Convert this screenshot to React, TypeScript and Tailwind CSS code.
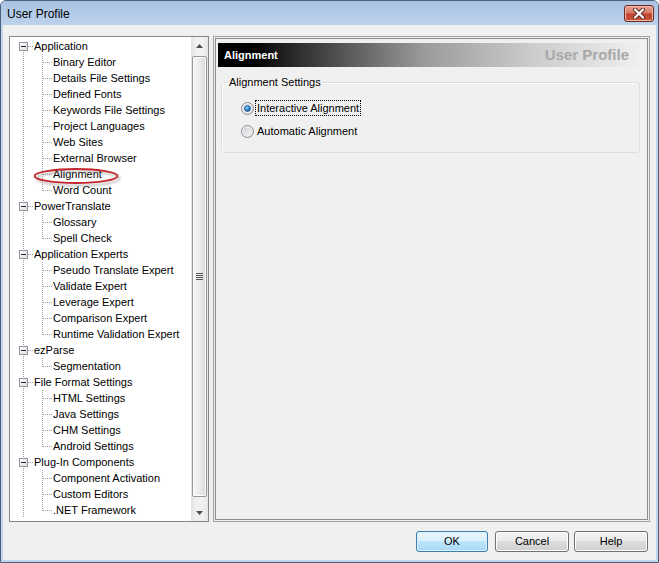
import React from 'react';

type Group = { label: string; children: string[] };

const tree: Group[] = [
  {
    label: 'Application',
    children: [
      'Binary Editor',
      'Details File Settings',
      'Defined Fonts',
      'Keywords File Settings',
      'Project Languages',
      'Web Sites',
      'External Browser',
      'Alignment',
      'Word Count',
    ],
  },
  { label: 'PowerTranslate', children: ['Glossary', 'Spell Check'] },
  {
    label: 'Application Experts',
    children: [
      'Pseudo Translate Expert',
      'Validate Expert',
      'Leverage Expert',
      'Comparison Expert',
      'Runtime Validation Expert',
    ],
  },
  { label: 'ezParse', children: ['Segmentation'] },
  {
    label: 'File Format Settings',
    children: ['HTML Settings', 'Java Settings', 'CHM Settings', 'Android Settings'],
  },
  {
    label: 'Plug-In Components',
    children: ['Component Activation', 'Custom Editors', '.NET Framework'],
  },
];

const DOT = '#a0a0a0';

function RootRow({ label, first }: { label: string; first: boolean }) {
  return (
    <div className="flex h-[16px] items-center">
      <svg width="24" height="16" className="shrink-0">
        <line x1="13.5" y1={first ? 8 : 0} x2="13.5" y2="16" stroke={DOT} strokeDasharray="1 1" />
        <line x1="18" y1="8.5" x2="24" y2="8.5" stroke={DOT} strokeDasharray="1 1" />
        <defs>
          <linearGradient id="boxg" x1="0" y1="0" x2="1" y2="1">
            <stop offset="0" stopColor="#ffffff" />
            <stop offset="1" stopColor="#dcdcdc" />
          </linearGradient>
        </defs>
        <rect x="9.5" y="4.5" width="8" height="8" fill="url(#boxg)" stroke="#8f9aa6" />
        <line x1="11" y1="8.5" x2="16" y2="8.5" stroke="#2a2a2a" />
      </svg>
      <span className="whitespace-nowrap leading-[16px]">{label}</span>
    </div>
  );
}

function ChildRow({ label, last }: { label: string; last: boolean }) {
  return (
    <div className="flex h-[16px] items-center">
      <svg width="43" height="16" className="shrink-0">
        <line x1="13.5" y1="0" x2="13.5" y2="16" stroke={DOT} strokeDasharray="1 1" />
        <line x1="32.5" y1="0" x2="32.5" y2={last ? 9 : 16} stroke={DOT} strokeDasharray="1 1" />
        <line x1="33" y1="8.5" x2="42" y2="8.5" stroke={DOT} strokeDasharray="1 1" />
      </svg>
      <span className="whitespace-nowrap leading-[16px]">{label}</span>
    </div>
  );
}

function Radio({ checked }: { checked: boolean }) {
  const id = checked ? 'r1' : 'r2';
  return (
    <svg width="13" height="13" className="shrink-0">
      <defs>
        <linearGradient id={`${id}o`} x1="0" y1="0" x2="1" y2="1">
          <stop offset="0" stopColor="#f4f4f4" />
          <stop offset="1" stopColor="#e2e2e2" />
        </linearGradient>
        <linearGradient id={`${id}i`} x1="0" y1="0" x2="1" y2="1">
          <stop offset="0" stopColor="#cbcfd5" />
          <stop offset="1" stopColor="#f7f7f7" />
        </linearGradient>
        <radialGradient id={`${id}d`} cx="0.4" cy="0.35" r="0.7">
          <stop offset="0" stopColor="#8ad3fb" />
          <stop offset="0.6" stopColor="#2a7fd1" />
          <stop offset="1" stopColor="#1a4f8e" />
        </radialGradient>
      </defs>
      <circle cx="6.5" cy="6.5" r="6" fill={`url(#${id}o)`} stroke="#8b8d8f" />
      <circle cx="6.5" cy="6.5" r="4.2" fill={`url(#${id}i)`} />
      {checked && <circle cx="6.5" cy="6.5" r="3" fill={`url(#${id}d)`} stroke="#1b4a80" strokeWidth="0.6" />}
    </svg>
  );
}

function Btn({ label, def }: { label: string; def?: boolean }) {
  return (
    <button
      className={
        def
          ? 'block w-[72px] h-[21px] rounded-[3px] border border-[#3c7fb1] bg-[linear-gradient(#eaf6fd_0%,#d9f0fc_50%,#bee6fd_50%,#a7d9f5_100%)] shadow-[inset_0_0_0_1px_#dff2fc] text-[11px] text-black leading-[19px]'
          : 'block w-[74px] h-[21px] rounded-[3px] border border-[#707070] bg-[linear-gradient(#f2f2f2_0%,#ebebeb_50%,#dddddd_50%,#cfcfcf_100%)] shadow-[inset_0_0_0_1px_#fcfcfc] text-[11px] text-black leading-[19px]'
      }
    >
      {label}
    </button>
  );
}

export default function App() {
  return (
    <div className="w-[659px] h-[563px] flex flex-col rounded-t-[6px] border border-[#4a607c] bg-[#c2d6ed] font-['Liberation_Sans',Arial,sans-serif] text-black overflow-hidden">
      {/* title bar */}
      <div className="h-[24px] shrink-0 flex items-center justify-between pl-[6px] pr-[4px] bg-[linear-gradient(#a9c3e2,#bcd2ec)]">
        <span className="text-[12px] leading-[16px] mt-[2px]">User Profile</span>
        <div className="w-[30px] h-[17px] rounded-[3px] border border-[#6b2b22] bg-[linear-gradient(#e9a697_0%,#d67a68_45%,#c2412c_55%,#c9563f_100%)] shadow-[inset_0_0_0_1px_#f0b6a8] flex items-center justify-center">
          <svg width="14" height="11" viewBox="0 0 14 11">
            <path d="M3 1.5 L11 9.5 M11 1.5 L3 9.5" stroke="#5a2a22" strokeWidth="4" strokeLinecap="round" />
            <path d="M3 1.5 L11 9.5 M11 1.5 L3 9.5" stroke="#ffffff" strokeWidth="2.2" strokeLinecap="round" />
          </svg>
        </div>
      </div>

      {/* client */}
      <div className="flex-1 mx-[2px] mb-[2px] bg-[#f0f0f0] flex flex-col pl-[6px] pr-[6px] pt-[11px]">
        <div className="h-[486px] flex gap-[4px]">
          {/* tree */}
          <div className="relative w-[200px] h-full border border-[#828790] bg-white flex text-[11px]">
            <div className="flex-1 pt-[1px] overflow-hidden">
              {tree.map((g, gi) => (
                <div key={g.label}>
                  <RootRow label={g.label} first={gi === 0} />
                  {g.children.map((c, ci) => (
                    <ChildRow key={c} label={c} last={ci === g.children.length - 1} />
                  ))}
                </div>
              ))}
            </div>
            {/* scrollbar */}
            <div className="w-[17px] h-full flex flex-col bg-[linear-gradient(to_right,#e2e2e2,#f1f1f1_30%,#f1f1f1_70%,#e6e6e6)]">
              <div className="h-[17px] flex items-center justify-center">
                <svg width="7" height="4">
                  <path d="M0 4 L3.5 0 L7 4 Z" fill="#4e4e4e" />
                </svg>
              </div>
              <div className="flex-1 flex flex-col pt-[2px] pb-[7px] px-[1px]">
                <div className="flex-1 rounded-[2px] border border-[#979797] bg-[linear-gradient(to_right,#f7f7f7,#ececec_50%,#d8d8d8)] shadow-[inset_0_0_0_1px_#fdfdfd] flex items-center justify-center">
                  <svg width="7" height="8">
                    <line x1="0" y1="0.5" x2="7" y2="0.5" stroke="#555" />
                    <line x1="0" y1="2.5" x2="7" y2="2.5" stroke="#555" />
                    <line x1="0" y1="4.5" x2="7" y2="4.5" stroke="#555" />
                    <line x1="0" y1="6.5" x2="7" y2="6.5" stroke="#555" />
                  </svg>
                </div>
              </div>
              <div className="h-[17px] flex items-center justify-center">
                <svg width="7" height="4">
                  <path d="M0 0 L7 0 L3.5 4 Z" fill="#4e4e4e" />
                </svg>
              </div>
            </div>
            {/* red annotation ellipse */}
            <svg className="absolute left-[12px] top-[128px] pointer-events-none" width="100" height="24">
              <defs>
                <filter id="sh" x="-20%" y="-50%" width="140%" height="200%">
                  <feGaussianBlur stdDeviation="1.2" />
                </filter>
              </defs>
              <ellipse cx="56" cy="13.5" rx="41.5" ry="7" fill="none" stroke="#8c8c8c" strokeWidth="2" opacity="0.55" filter="url(#sh)" />
              <ellipse cx="54" cy="11" rx="41.5" ry="7" fill="none" stroke="#c5262c" strokeWidth="1.8" />
            </svg>
          </div>

          {/* right panel */}
          <div className="w-[437px] h-full border border-[#a0a0a0] p-[1px]">
            <div className="h-full border border-[#8c8c8c] pl-[2px] pr-[5px] pt-[4px] text-[11px]">
              <div className="h-[24px] flex items-center justify-between pl-[6px] pr-[13px] bg-[linear-gradient(to_right,#000000_0%,#000000_8%,#2e2e2e_19%,#999999_48%,#cfcfcf_76%,#f0f0f0_100%)]">
                <span className="text-white font-bold text-[11px]">Alignment</span>
                <span className="text-[#a8a8a8] font-bold text-[15px]">User Profile</span>
              </div>
              <fieldset className="mt-[9px] ml-[3px] w-[419px] rounded-[3px] border border-[#d5dfe5] shadow-[inset_1px_1px_0_#ffffff] px-[6px] pb-[13px]">
                <legend className="px-[1px] leading-[13px]">Alignment Settings</legend>
                <div className="pl-[13px] pt-[11px] flex flex-col gap-[7px]">
                  <div className="flex h-[16px] items-center">
                    <Radio checked />
                    <span className="ml-[1px] border border-dotted border-black px-[1px] leading-[14px]">
                      Interactive Alignment
                    </span>
                  </div>
                  <div className="flex h-[16px] items-center">
                    <Radio checked={false} />
                    <span className="ml-[2px] pl-[1px] leading-[14px]">Automatic Alignment</span>
                  </div>
                </div>
              </fieldset>
            </div>
          </div>
        </div>

        {/* buttons */}
        <div className="mt-[9px] flex items-start justify-end pr-[2px]">
          <div className="mr-[7px]">
            <Btn label="OK" def />
          </div>
          <div className="mr-[5px]">
            <Btn label="Cancel" />
          </div>
          <Btn label="Help" />
        </div>
      </div>
    </div>
  );
}
